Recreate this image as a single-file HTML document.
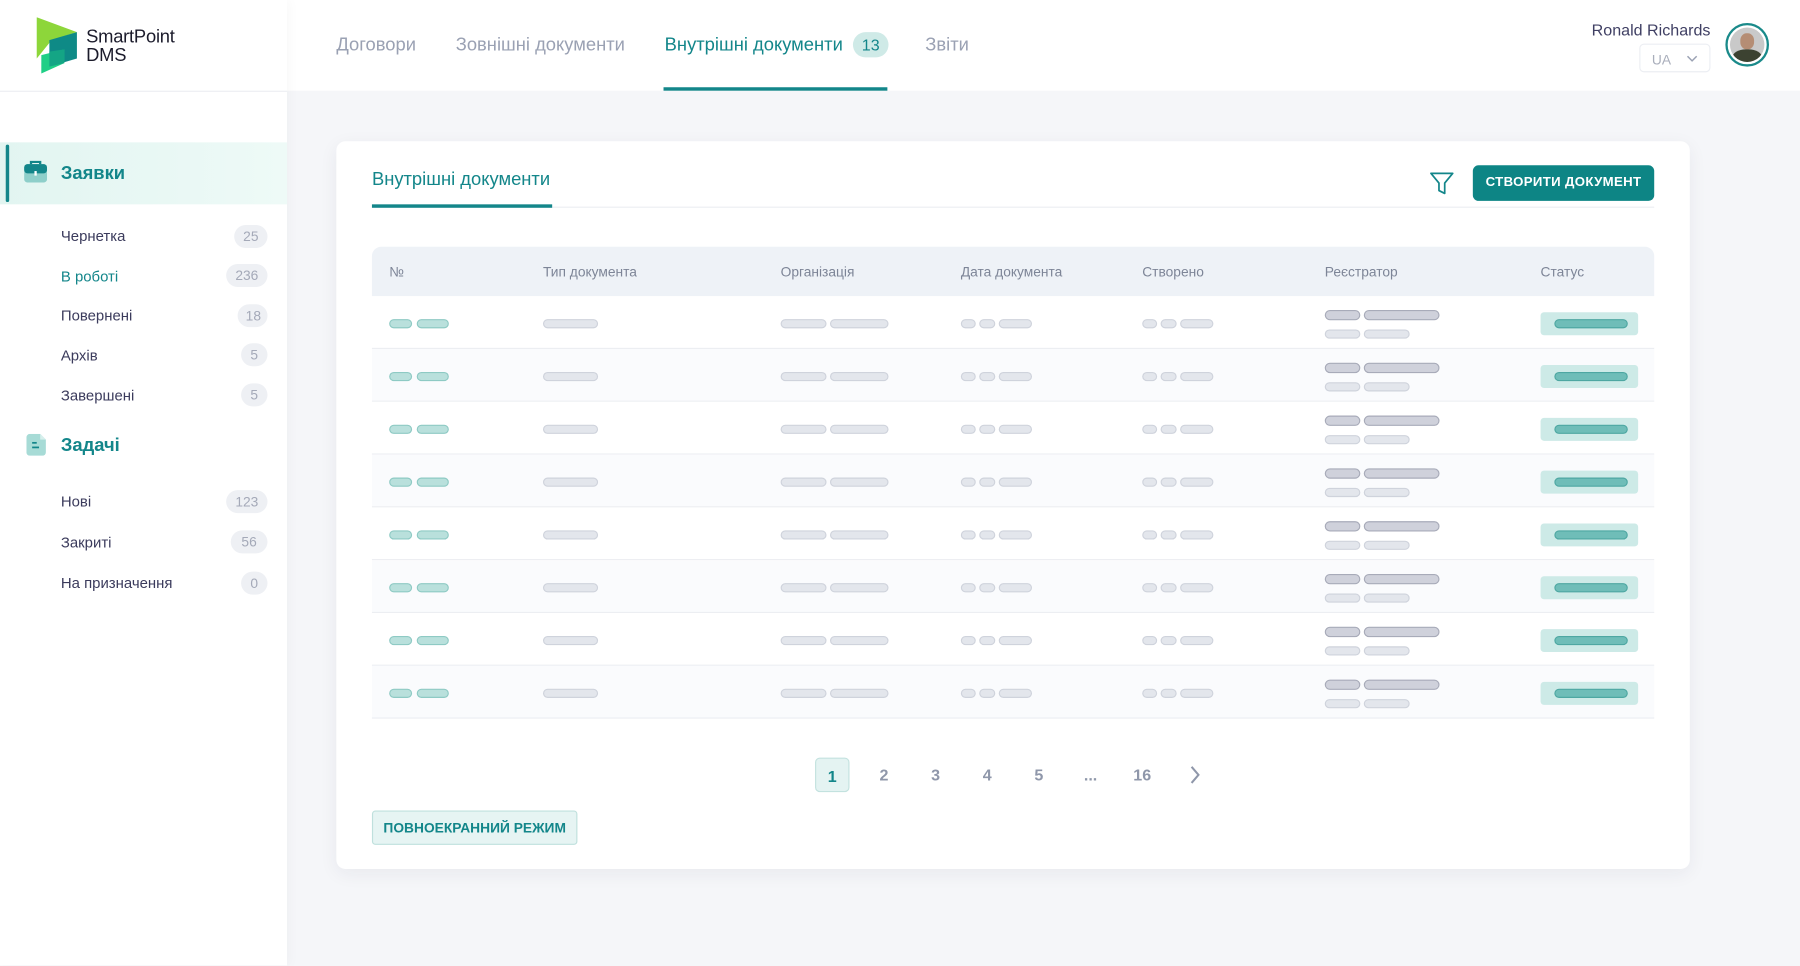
<!DOCTYPE html>
<html><head><meta charset="utf-8"><style>
*{margin:0;padding:0;box-sizing:border-box}
html,body{width:1800px;height:966px;overflow:hidden;background:#f5f6f9;font-family:"Liberation Sans",sans-serif}
#w{position:absolute;left:0;top:0;width:1568px;height:841px;transform:scale(1.14796);transform-origin:0 0;background:#f5f6f9}
.a{position:absolute}
.side{left:0;top:0;width:250px;height:841px;background:#fff;box-shadow:2px 0 10px rgba(0,0,0,.03)}
.hdr{left:250px;top:0;width:1318px;height:79px;background:#fff}
.nav{top:31px;font-size:16px;color:#9aa1b3;white-space:nowrap}
.mi{left:53px;font-size:13px;color:#3b3b5c}
.bd{right:17px;height:20px;border-radius:10px;background:#eef0f4;color:#a4a9b8;font-size:12px;line-height:20px;text-align:center;padding:0 7px}
.card{left:293px;top:123px;width:1179px;height:634px;background:#fff;border-radius:8px;box-shadow:0 4px 16px rgba(30,40,60,.06)}
.th{top:230px;font-size:12px;color:#7d8597}
.p{position:absolute;height:8px;border-radius:4px;background:#e3e6ec;border:1px solid #cfd3dc}
.t{background:#b9e0dc;border-color:#8ecac4}
.d{background:#cfd1db;border-color:#a8abb9;height:9px;border-radius:5px}
.pg{top:660px;width:30px;height:30px;border-radius:4px;font-size:14px;color:#8f97aa;text-align:center;line-height:30px;font-weight:bold}
</style></head><body><div id="w">
<div class="a hdr"></div>
<div class="a side"></div>
<div class="a" style="left:0;top:79px;width:250px;height:1px;background:#eceef2"></div>
<svg class="a" style="left:31px;top:15px" width="38" height="50" viewBox="0 0 38 50"><polygon points="1,0 36,13 14,20 1,36" fill="#8dd63a"/><polygon points="12,20 36,13 36,36 12,43" fill="#0e8a86"/><polygon points="5,33 25,28 25,40 5,49" fill="#1fcf86"/><polygon points="12,30 25,28 25,40 12,43" fill="#14a585"/></svg>
<div class="a" style="left:75px;top:25px;font-size:16px;line-height:16px;color:#1b1b2b;letter-spacing:-.2px">SmartPoint<br>DMS</div>
<div class="a nav" style="left:293px">Договори</div>
<div class="a nav" style="left:397px">Зовнішні документи</div>
<div class="a nav" style="left:579px;color:#13868a">Внутрішні документи</div>
<div class="a" style="left:743px;top:28px;width:31px;height:22px;border-radius:11px;background:#cfeae7;color:#13868a;font-size:14px;text-align:center;line-height:22px">13</div>
<div class="a" style="left:578px;top:76px;width:195px;height:3px;background:#13868a"></div>
<div class="a nav" style="left:806px">Звіти</div>
<div class="a" style="left:1360px;top:18px;width:130px;text-align:right;font-size:14px;color:#3f3f63">Ronald Richards</div>
<div class="a" style="left:1428px;top:38px;width:62px;height:25px;border:1px solid #eceef3;border-radius:4px;font-size:12px;color:#a9aebb;padding:6px 0 0 10px">UA<svg class="a" style="left:40px;top:9px" width="10" height="6"><path d="M1 1l4 4 4-4" stroke="#9aa1b3" fill="none" stroke-width="1.3"/></svg></div>
<div class="a" style="left:1503px;top:20px;width:38px;height:38px;border-radius:50%;border:2px solid #1a8a8a;background:#fff;overflow:hidden"><div class="a" style="left:2px;top:2px;width:30px;height:30px;border-radius:50%;background:#c9c9c9;overflow:hidden"><div class="a" style="left:9px;top:5px;width:12px;height:14px;border-radius:45%;background:#b58d74"></div><div class="a" style="left:2px;top:19px;width:26px;height:16px;border-radius:45% 45% 0 0;background:#3c4231"></div></div></div>
<div class="a" style="left:0;top:124px;width:250px;height:54px;background:linear-gradient(90deg,#e2f5f1,#eefaf7)"></div>
<div class="a" style="left:5px;top:126px;width:3px;height:50px;background:#13868a;border-radius:2px"></div>
<svg class="a" style="left:21px;top:140px" width="20" height="19" viewBox="0 0 20 19"><rect x="0" y="3" width="20" height="16" rx="3" fill="#8ecfca"/><rect x="0" y="3" width="20" height="8" rx="3" fill="#13868a"/><path d="M6 3V1h8v2" stroke="#13868a" fill="none" stroke-width="2"/><rect x="9" y="9" width="2" height="4" fill="#fff"/></svg>
<div class="a" style="left:53px;top:143px;font-size:16px;font-weight:bold;color:#13868a">Заявки</div>
<div class="a mi" style="top:198px">Чернетка</div><div class="a bd" style="top:196px;right:1335px;left:204px">25</div>
<div class="a mi" style="top:233px;color:#13868a">В роботі</div><div class="a bd" style="top:230px;left:197px;right:auto;width:36px">236</div>
<div class="a mi" style="top:267px">Повернені</div><div class="a bd" style="top:265px;left:207px;right:auto;width:26px">18</div>
<div class="a mi" style="top:302px">Архів</div><div class="a bd" style="top:299px;left:210px;right:auto;width:23px">5</div>
<div class="a mi" style="top:337px">Завершені</div><div class="a bd" style="top:334px;left:210px;right:auto;width:23px">5</div>
<svg class="a" style="left:23px;top:378px" width="17" height="19" viewBox="0 0 17 19"><path d="M3 0h9l5 5v11a3 3 0 0 1-3 3H3a3 3 0 0 1-3-3V3a3 3 0 0 1 3-3z" fill="#a7dbd6"/><path d="M12 0v5h5" fill="#d6efec"/><rect x="5" y="7" width="4" height="1.5" fill="#13868a"/><rect x="5" y="11" width="6" height="1.5" fill="#13868a"/></svg>
<div class="a" style="left:53px;top:380px;font-size:16px;font-weight:bold;color:#13868a">Задачі</div>
<div class="a mi" style="top:429px">Нові</div><div class="a bd" style="top:427px;left:197px;right:auto;width:36px">123</div>
<div class="a mi" style="top:465px">Закриті</div><div class="a bd" style="top:462px;left:201px;right:auto;width:32px">56</div>
<div class="a mi" style="top:500px">На призначення</div><div class="a bd" style="top:498px;left:210px;right:auto;width:23px">0</div>

<div class="a card"></div>
<div class="a" style="left:324px;top:148px;font-size:16px;color:#13868a">Внутрішні документи</div>
<div class="a" style="left:324px;top:180px;width:1117px;height:1px;background:#eceef2"></div>
<div class="a" style="left:324px;top:178px;width:157px;height:3px;background:#13868a"></div>
<svg class="a" style="left:1245px;top:149px" width="22" height="22" viewBox="0 0 22 22"><path d="M1.5 2h19l-7 8.5v9l-5-2.5v-6.5z" fill="none" stroke="#13868a" stroke-width="1.5" stroke-linejoin="round"/></svg>
<div class="a" style="left:1283px;top:144px;width:158px;height:31px;border-radius:5px;background:#0d8585;color:#fff;font-size:11.5px;font-weight:bold;text-align:center;line-height:31px;letter-spacing:.3px">СТВОРИТИ ДОКУМЕНТ</div>
<div class="a" style="left:324px;top:215px;width:1117px;height:43px;background:#eef2f7;border-radius:8px 8px 0 0"></div>
<div class="a th" style="left:339px">№</div><div class="a th" style="left:473px">Тип документа</div><div class="a th" style="left:680px">Організація</div><div class="a th" style="left:837px">Дата документа</div><div class="a th" style="left:995px">Створено</div><div class="a th" style="left:1154px">Реєстратор</div><div class="a th" style="left:1342px">Статус</div>
<div id="rows"></div>
<script>
var h='';for(var i=0;i<8;i++){var y=258+i*46,c=y+20;
h+='<div class="a" style="left:324px;top:'+y+'px;width:1117px;height:46px;background:'+(i%2?'#fafbfd':'#fff')+';border-bottom:1px solid #eceef2"></div>';
function p(x,w,cl,yy){h+='<div class="p '+(cl||'')+'" style="left:'+x+'px;width:'+w+'px;top:'+(yy||c)+'px"></div>';}
p(339,20,'t');p(363,28,'t');p(473,48);p(680,40);p(723,51);p(837,13);p(853,14);p(870,29);p(995,13);p(1011,14);p(1028,29);
p(1154,31,'d',y+12);p(1188,66,'d',y+12);p(1154,31,'',y+29);p(1188,40,'',y+29);
h+='<div class="a" style="left:1342px;top:'+(y+14)+'px;width:85px;height:20px;background:#cdeae7;border-radius:3px"></div>';
h+='<div class="p" style="left:1354px;width:64px;top:'+(c)+'px;background:#6fbdb8;border-color:#4ea7a2"></div>';}
document.getElementById('rows').outerHTML=h;
</script>
<div class="a pg" style="left:710px;background:#e4f3f2;border:1px solid #c3e2df;color:#13868a">1</div>
<div class="a pg" style="left:755px">2</div><div class="a pg" style="left:800px">3</div><div class="a pg" style="left:845px">4</div><div class="a pg" style="left:890px">5</div><div class="a pg" style="left:935px">...</div><div class="a pg" style="left:980px">16</div>
<svg class="a" style="left:1035px;top:666px" width="12" height="18"><path d="M3 2l6 7-6 7" stroke="#8f97aa" stroke-width="1.8" fill="none"/></svg>
<div class="a" style="left:324px;top:706px;width:179px;height:30px;border:1px solid #bfe0dd;background:#e6f4f3;border-radius:3px;color:#13868a;font-size:12px;font-weight:bold;text-align:center;line-height:28px">ПОВНОЕКРАННИЙ РЕЖИМ</div>
</div></body></html>
